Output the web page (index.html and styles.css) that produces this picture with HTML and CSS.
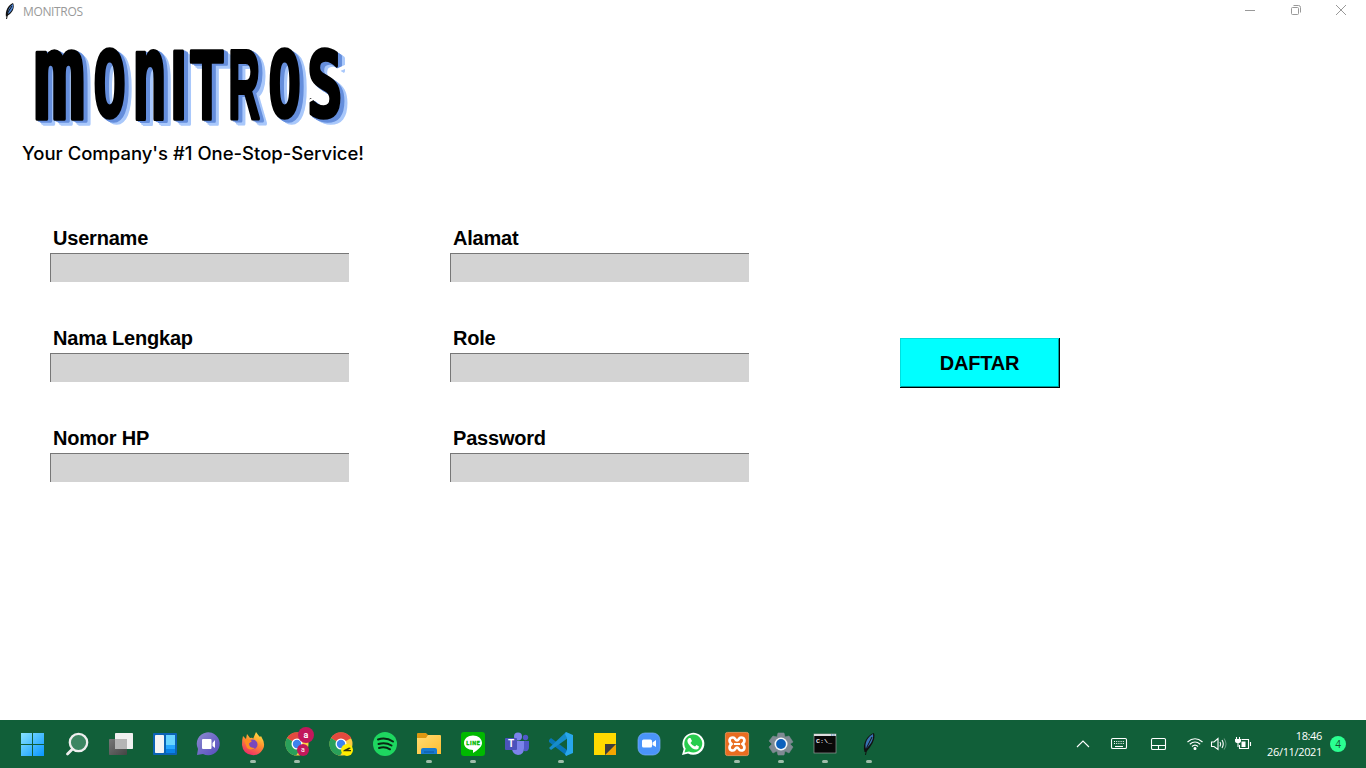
FILE: index.html
```html
<!DOCTYPE html>
<html lang="id">
<head>
<meta charset="utf-8">
<title>MONITROS</title>
<link rel="stylesheet" href="styles.css">
</head>
<body>
<div class="desktop">
  <header class="titlebar">
    <svg class="feather" width="12" height="18" viewBox="0 0 12 18"><path d="M2 15C1 9 4 3 9 1C11 5 9 11 3 14Z" fill="#111"/><path d="M3.500 11C4 7 6 4 9 2C10 6 7 10 4 12Z" fill="#5189d9"/><path d="M2.500 17L4 10L8 4" stroke="#111" fill="none"/></svg>
    <span class="title">MONITROS</span>
    <div class="controls">
      <svg width="12" height="12" viewBox="0 0 12 12"><path d="M1 6.500H11"/></svg>
      <svg width="12" height="12" viewBox="0 0 12 12"><rect x="1.500" y="3.500" width="7" height="7" rx="1"/><path d="M3.500 1.500H8.500Q10.500 1.500 10.500 3.500V8.500"/></svg>
      <svg width="12" height="12" viewBox="0 0 12 12"><path d="M1 1L11 11M11 1L1 11"/></svg>
    </div>
  </header>

  <main class="window">
    <div class="brand">
      <svg class="logo" width="380" height="110" viewBox="0 22 380 110" role="img" aria-label="MONITROS">
        <defs>
          <g id="wordmark" class="wordmark">
            <text class="square" transform="translate(33.300 118.500) scale(.870 1.220)">m</text>
            <text class="square" transform="translate(93.200 117.300) scale(.545 .905)">O</text>
            <text class="square" transform="translate(131.400 118.500) scale(.600 1.220)">n</text>
            <text transform="translate(170.300 118.500) scale(.600 .99)">I</text>
            <text transform="translate(190.300 118.500) scale(.545 .99)">T</text>
            <text transform="translate(228.300 118.500) scale(.440 .99)">R</text>
            <text class="square" transform="translate(268.200 117.300) scale(.545 .905)">O</text>
            <text class="square" transform="translate(306.800 117.300) scale(.600 .905)">S</text>
          </g>
        </defs>
        <use href="#wordmark" class="shade-far" x="7" y="5"/>
        <use href="#wordmark" class="shade-far" x="5.500" y="4"/>
        <use href="#wordmark" class="shade-near" x="4" y="2.500"/>
        <use href="#wordmark" class="shade-near" x="2" y="1.500"/>
        <use href="#wordmark" class="face"/>
        <path d="M327 73L347 64V68L332 75ZM308 100L325 92L327 99L321 96L308 103Z" fill="#fff"/>
      </svg>
      <svg class="tagline" width="380" height="34" viewBox="0 132 380 34"><text x="22" y="159.500" textLength="342" lengthAdjust="spacingAndGlyphs">Your Company's #1 One-Stop-Service!</text></svg>
    </div>
    <form class="form">
      <div class="column">
        <label class="field"><span>Username</span><input type="text"></label>
        <label class="field"><span>Nama Lengkap</span><input type="text"></label>
        <label class="field"><span>Nomor HP</span><input type="text"></label>
      </div>
      <div class="column">
        <label class="field"><span>Alamat</span><input type="text"></label>
        <label class="field"><span>Role</span><input type="text"></label>
        <label class="field"><span>Password</span><input type="password"></label>
      </div>
      <button class="submit" type="button">DAFTAR</button>
    </form>
  </main>

  <footer class="taskbar">
    <nav class="apps">
      <div class="app"><svg viewBox="0 0 24 24"><defs><linearGradient id="win" x1="0" y1="0" x2="24" y2="24" gradientUnits="userSpaceOnUse"><stop stop-color="#8be4ff"/><stop offset="1" stop-color="#0595ff"/></linearGradient></defs><path d="M0 1H11V12H0ZM12 1H23V12H12ZM0 13H11V24H0ZM12 13H23V24H12Z" fill="url(#win)"/></svg></div>
      <div class="app"><svg viewBox="0 0 24 24"><circle cx="13.500" cy="10.500" r="8.700" fill="#3c8662" stroke="#eee" stroke-width="2.300"/><path d="M7.500 17L2.500 22" stroke="#eee" stroke-width="2.800" stroke-linecap="round"/></svg></div>
      <div class="app"><svg viewBox="0 0 24 24"><defs><linearGradient id="tv" x2="1" y2="1"><stop stop-color="#777"/><stop offset="1" stop-color="#444"/></linearGradient></defs><rect x="6" y="1" width="18" height="16" rx=".7" fill="#f0f0f0"/><rect y="7" width="18" height="16" rx=".7" fill="url(#tv)"/><path d="M6 7H18V17H6Z" fill="#b5b5b5"/></svg></div>
      <div class="app"><svg viewBox="0 0 24 24"><rect y="1" width="24" height="22" rx="1" fill="#0b63b5"/><rect x="2" y="3" width="9" height="18" rx=".8" fill="#f4f4f4"/><path d="M13 3H22V13H13Z" fill="#69d5ff"/><path d="M13 13H22V17H13Z" fill="#26a7ff"/><path d="M13 17H22V21H13Z" fill="#0a83e8"/></svg></div>
      <div class="app"><svg viewBox="0 0 24 24"><defs><linearGradient id="chat" x2="1" y2="1"><stop stop-color="#8c8bd0"/><stop offset="1" stop-color="#554bbd"/></linearGradient></defs><path d="M0 23L1 17A11.500 11.500 0 1 1 6 22Z" fill="url(#chat)"/><rect x="5" y="7" width="9.500" height="10" rx="1" fill="#fff"/><path d="M15.500 11L18 8V16L15.500 14Z" fill="#fff"/></svg></div>
      <div class="app running"><svg viewBox="0 0 24 24"><defs><linearGradient id="ff" x1=".8" y1="0" x2=".3" y2="1"><stop stop-color="#ffe646"/><stop offset=".45" stop-color="#ff922e"/><stop offset="1" stop-color="#ed286b"/></linearGradient></defs><path d="M2 4L5 7L6 2L9 6Q12 5 12 7L15 0Q17 3 19 5L20 4Q25 12 22 17Q18 24 11 23Q2 22 1 13Q1 7 2 4Z" fill="url(#ff)"/><circle cx="11.500" cy="12.500" r="5" fill="#7848bd"/><path d="M3 8Q7 6 11 9L8 11.500Q8 16 14 16Q10 19 6 16Z" fill="#ff8d22"/></svg></div>
      <div class="app running"><svg viewBox="0 0 24 24"><g id="chrome"><circle cx="12" cy="12" r="11.500" fill="#ffcc40"/><path d="M12 12L2 6A11.500 11.500 0 0 1 22 6Z" fill="#e44a3f"/><path d="M12 12L2 6A11.500 11.500 0 0 0 11 23.500L17 15Z" fill="#29a05a"/><path d="M12 6.500H22.300L21 4L12 4Z" fill="#e44a3f"/><circle cx="12" cy="12" r="5.500" fill="#fff"/><circle cx="12" cy="12" r="4.200" fill="#3e83ee"/></g><circle cx="21" cy="3" r="8" fill="#c2185b"/><circle cx="18" cy="18" r="6" fill="#c2185b"/><text class="badge-letter" x="21" y="6" font-size="9" font-weight="bold">a</text><text class="badge-letter" x="18" y="20" font-size="7">a</text></svg></div>
      <div class="app"><svg viewBox="0 0 24 24"><use href="#chrome"/><circle cx="18" cy="18" r="6" fill="#ffee00"/><path d="M15 18L20 15.500L22 16L19 18H22V19.300H14Z" fill="#34330a"/></svg></div>
      <div class="app"><svg viewBox="0 0 24 24"><circle cx="12" cy="12" r="12" fill="#1ed760"/><path d="M5 7.500Q13 5 20 9.500M5.500 12Q12.500 9.800 18.500 13.500M6 16Q12 14.200 17 17.300" fill="none" stroke="#092713" stroke-width="2" stroke-linecap="round"/></svg></div>
      <div class="app running"><svg viewBox="0 0 24 24"><defs><linearGradient id="folder" x2="1" y2="1"><stop stop-color="#ffdc73"/><stop offset="1" stop-color="#ffbd30"/></linearGradient></defs><path d="M0 2Q0 1 1 1H9L11 3V10H0Z" fill="#dc9811"/><path d="M0 6H9L11 3H23Q24 3 24 4V22H0Z" fill="url(#folder)"/><path d="M4 22V18Q4 16 6 16H18Q20 16 20 18V22Z" fill="#187bd1"/><path d="M7 20H17" stroke="#0b569f"/></svg></div>
      <div class="app running"><svg viewBox="0 0 24 24"><rect width="24" height="24" rx="3" fill="#00b900"/><path d="M12 3.500C17 3.500 21 6.500 21 11C21 15 16 18.500 12 21V18C7 18 3 15 3 11C3 6.500 7 3.500 12 3.500Z" fill="#fff"/><text x="5.300" y="13" textLength="13.500" class="line-name">LINE</text></svg></div>
      <div class="app"><svg viewBox="0 0 24 24"><circle cx="13" cy="4.500" r="4" fill="#7b83eb"/><circle cx="20.500" cy="5.500" r="2.700" fill="#5059c9"/><path d="M17 9H24V15Q24 20 19 19Z" fill="#5059c9"/><path d="M7 9H19V16Q19 23 13 23Q7 22 7 16Z" fill="#7b83eb"/><rect y="6" width="12" height="12" rx="1" fill="#4b53bc"/><text x="6" y="15.300" class="teams-letter">T</text></svg></div>
      <div class="app running"><svg viewBox="0 0 24 24"><path d="M0 8L2 6L18 18V24L0 10Z" fill="#0876b8"/><path d="M0 16L17 0L19 6L2 18Z" fill="#168ccb"/><path d="M17 0L24 3V21L17 24L16 22L18 18V6L16 2Z" fill="#28a7ed"/></svg></div>
      <div class="app"><svg viewBox="0 0 24 24"><path d="M1 1H23V12L12 23H1Z" fill="#ffd900"/><path d="M23 12V23H12Z" fill="#f3a600"/><path d="M12 12H23L12 23Z" fill="#3d3d3d"/></svg></div>
      <div class="app"><svg viewBox="0 0 24 24"><rect x="1" y="1" width="22" height="22" rx="7" fill="#4a94fa" stroke="#78aff7" stroke-width=".7"/><rect x="5" y="7.500" width="10" height="8" rx="1.500" fill="#fff"/><path d="M15.500 10.500L19 8V15L15.500 13Z" fill="#fff"/></svg></div>
      <div class="app"><svg viewBox="0 0 24 24"><path d="M1 23L2.700 17A11 11 0 1 1 7 21.400Z" fill="#fff"/><path d="M3.500 20.500L4.700 16.500A9 9 0 1 1 8 19.500Z" fill="#28cc4e"/><path d="M8 6H9.500L11 9L9.500 11Q11.500 14 14 14.500L15.500 13L18 14.500Q18 17 15.500 17.500Q11 17.500 7.500 12Q5 8 8 6Z" fill="#fff"/></svg></div>
      <div class="app running"><svg viewBox="0 0 24 24"><rect x=".4" y=".4" width="23.200" height="23.200" rx="2" fill="#e96d20" stroke="#f29a60" stroke-width=".8"/><path d="M8 5.500C4 5.500 3.500 9.500 6.500 12C3.500 14.500 4 18.500 8 18.500C10.500 18.500 10 15.500 12 15.500S13.500 18.500 16 18.500C20 18.500 20.500 14.500 17.500 12C20.500 9.500 20 5.500 16 5.500C13.500 5.500 14 8.500 12 8.500S10.500 5.500 8 5.500Z" fill="none" stroke="#fff" stroke-width="2.700"/><path d="M9 12H15" stroke="#fff" stroke-width="2"/></svg></div>
      <div class="app running"><svg viewBox="0 0 24 24"><path d="M9 1H15L16 5L20 4L24 10L21 12L24 15L20 21L16 19L15 23H9L8 19L4 21L0 15L3 12L0 9L4 4L8 5Z" fill="#7f8a93" stroke="#7f8a93" stroke-linejoin="round" stroke-width=".6"/><circle cx="12" cy="12" r="6.500" fill="#f3f7fa"/><circle cx="12" cy="12" r="4.900" fill="#0b61bd"/></svg></div>
      <div class="app running"><svg viewBox="0 0 24 24"><rect x="1" y="2" width="22" height="19" fill="#090909" stroke="#999" stroke-width=".7"/><path d="M1 2H23V4H1Z" fill="#ddd"/><path d="M18 3H22" stroke="#357ac0" stroke-dasharray="1 .7"/><text x="3" y="10.500" textLength="16" lengthAdjust="spacingAndGlyphs" class="console-text">C:\_</text></svg></div>
      <div class="app running"><svg viewBox="0 0 24 24"><path d="M7.500 20C5 12 10 3 17 1C19 7 14 15 9 20Z" fill="#111"/><path d="M8.500 15C8 9 12 4 16 2C17 8 13 13 9 17Z" fill="#3972b4"/><path d="M8.500 23L10 15L15 5" fill="none" stroke="#111"/></svg></div>
    </nav>
    <div class="tray">
      <svg class="chevron" width="14" height="14" viewBox="0 0 14 14"><path d="M1 10L7 4L13 10"/></svg>
      <svg class="keyboard" width="16" height="14" viewBox="0 0 16 14"><rect x=".5" y="1.500" width="15" height="10" rx="1.300"/><path d="M3 4.500H13M3 6.500H13" stroke-dasharray="1 1.200"/><path d="M4 9.500H12"/></svg>
      <svg class="touchpad" width="15" height="14" viewBox="0 0 15 14"><rect x=".5" y="1.500" width="14" height="11" rx="1.300"/><path d="M.5 8.500H14.500M7.500 8.500V12.500"/></svg>
      <svg class="wifi" width="16" height="14" viewBox="0 0 16 14"><path d="M.5 5Q8-1.500 15.500 5M2.800 7.200Q8 2.800 13.200 7.200M5 9.500Q8 6.800 11 9.500" stroke-width="1.200"/><circle cx="8" cy="11.500" r="1" fill="#fff"/></svg>
      <svg class="speaker" width="16" height="14" viewBox="0 0 16 14"><path d="M.5 5H3L7 1.500V12.500L3 9.500H.5ZM9 5Q10.500 7 9 9.500M11 3Q13.500 7 11 11"/><path d="M13 1.500Q17 7 13 12.500" opacity=".35"/></svg>
      <svg class="battery" width="17" height="14" viewBox="0 0 17 14"><path d="M6.500 2.500H13.500V11.500H4.500V8M15.500 5V9M1.500 0V3M4.500 0V3M3 6V10"/><path d="M0 2H6V4Q6 6 3 6Q0 6 0 4ZM6.500 4.500H10.500V10H6.500Z" fill="#fff" stroke="none"/></svg>
      <div class="clock"><span>18:46</span><span>26/11/2021</span></div>
      <span class="notifications">4</span>
    </div>
  </footer>
</div>
</body>
</html>
```

FILE: styles.css
```css
* { box-sizing: border-box; }
body { margin: 0; overflow: hidden; background: #fff; font-family: "Liberation Sans", Arial, sans-serif; }
svg { display: block; flex: none; overflow: visible; }
.desktop { width: 1366px; height: 768px; display: flex; flex-direction: column; }
.titlebar { height: 22px; display: flex; align-items: center; padding: 0 19px 0 4px; color: #999; }
.title { margin-left: 7px; padding-top: 1px; font: 12px/21px "Open Sans", sans-serif; letter-spacing: -.35px; }
.controls { margin-left: auto; display: flex; gap: 33.500px; padding-bottom: 2px; }
.controls svg { fill: none; stroke: #999; stroke-width: 1; }
.window { flex: 1; display: flex; flex-direction: column; }
.brand { height: 144px; }
.wordmark text { font: bold 100px "Liberation Sans", Arial, sans-serif; vector-effect: non-scaling-stroke; stroke-width: 3px; stroke-linejoin: round; }
.wordmark .square { font-family: "DejaVu Sans Mono", monospace; }
.face { fill: #000; stroke: #000; }
.shade-near { fill: #658edc; stroke: #658edc; }
.shade-far { fill: #a9c8fb; stroke: #a9c8fb; }
.tagline text { font: 500 18px Inter, sans-serif; fill: #000; }
.form { display: flex; align-items: flex-start; padding: 59px 0 0 50px; }
.column { display: flex; flex-direction: column; gap: 43px; width: 400px; }
.field { display: flex; flex-direction: column; height: 57px; }
.field span { padding-left: 3px; height: 28px; font-weight: bold; font-size: 20px; line-height: 26px; letter-spacing: -.2px; color: #000; }
.field input { width: 299px; height: 29px; padding: 0 3px; border: 0 solid #777; border-width: 1px 0 0 1px; border-radius: 0; background: #d3d3d3; outline: none; }
.submit { width: 160px; height: 50px; margin: 113px 0 0 50px; padding: 2px 0 0; border: 0; background: #0ff; color: #000; font: bold 20px "Liberation Sans", Arial, sans-serif; letter-spacing: -.2px; border-right: 1px solid #000; border-bottom: 1px solid #000; box-shadow: inset 1px 1px #00dede, inset -1px -1px #009b9b; }
.taskbar { height: 48px; display: flex; justify-content: space-between; background: #115f39; }
.apps { display: flex; padding-left: 11px; }
.app { width: 44px; height: 48px; display: flex; flex-direction: column; align-items: center; padding-top: 12px; }
.app svg { width: 24px; height: 24px; margin-left: -1px; }
.running::after { content: ""; width: 6px; height: 3px; margin: 4px 0 0 -1px; border-radius: 2px; background: #9dbdaa; }
.badge-letter { fill: #fff; text-anchor: middle; font-family: Roboto, sans-serif; }
.line-name { fill: #00b900; stroke: #00b900; stroke-width: .3px; font: bold 5.500px Roboto, sans-serif; }
.teams-letter { fill: #fff; text-anchor: middle; font: bold 10px Roboto, sans-serif; }
.console-text { fill: #eee; font: bold 6px "Liberation Mono", monospace; }
.tray { display: flex; align-items: center; padding-right: 20px; }
.tray svg { fill: none; stroke: #fff; stroke-width: 1.100px; }
.keyboard { margin-left: 21px; }
.touchpad { margin-left: 24px; }
.wifi { margin-left: 21px; }
.speaker { margin-left: 8px; }
.battery { margin-left: 8px; }
.clock { width: 70px; display: flex; flex-direction: column; align-items: flex-end; color: #fff; font: 11px/16px "Open Sans", sans-serif; letter-spacing: -.35px; white-space: nowrap; }
.notifications { width: 16px; height: 16px; margin-left: 8px; border-radius: 50%; background: #2bff91; color: #15502f; text-align: center; font: 10px/16px "Open Sans", sans-serif; }
```
